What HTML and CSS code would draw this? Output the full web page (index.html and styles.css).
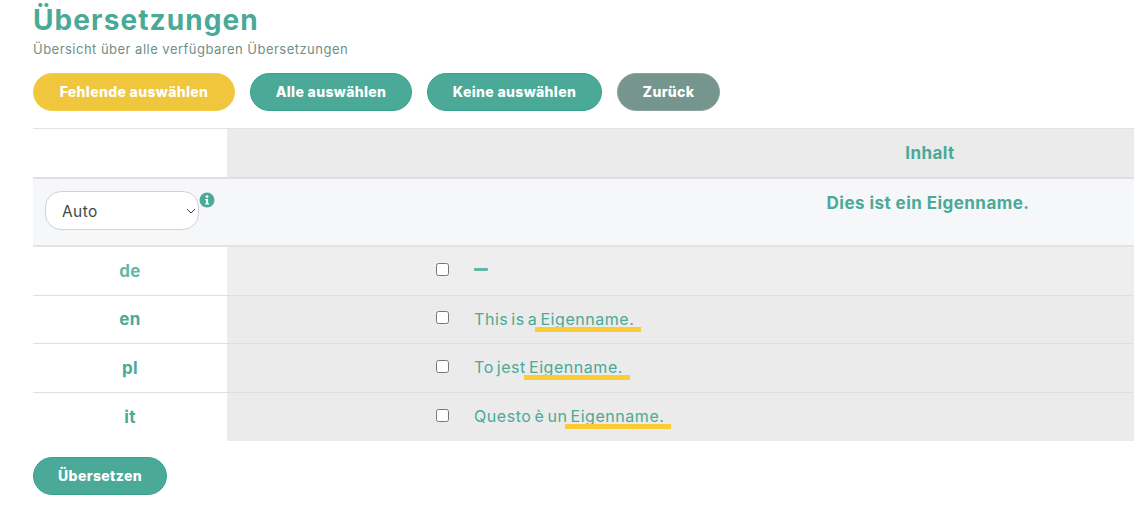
FILE: index.html
```html
<!DOCTYPE html>
<html lang="de">
<head>
    <meta charset="UTF-8" />
    <meta name="viewport" content="width=device-width, initial-scale=1.0" />
    <title>Übersetzungen</title>
    <link rel="stylesheet" href="styles.css">
</head>
<body>
    <h1 class="page-title">Übersetzungen</h1>
    <p class="page-subtitle">Übersicht über alle verfügbaren Übersetzungen</p>

    <div class="button-row">
        <button class="btn btn-yellow btn-missing">Fehlende auswählen</button>
        <button class="btn btn-green btn-all">Alle auswählen</button>
        <button class="btn btn-green btn-none">Keine auswählen</button>
        <button class="btn btn-grey btn-back">Zurück</button>
    </div>

    <div class="table">
        <div class="row row-head">
            <div class="cell-lang"></div>
            <div class="cell-check"></div>
            <div class="cell-text">Inhalt</div>
        </div>
        <div class="row row-source">
            <div class="cell-lang">
                <select class="lang-select"><option>Auto</option></select>
                <svg class="select-arrow" viewBox="0 0 10 6" width="10" height="6">
                    <path d="M1 1l4 4 4-4" fill="none" stroke="#3d4a47" stroke-width="1" />
                </svg>
                <svg class="info-icon" viewBox="0 0 16 16" width="16" height="16">
                    <circle cx="8" cy="8" r="7.5" fill="#4aa997" />
                    <circle cx="8" cy="4.6" r="1.4" fill="#fff" />
                    <path d="M6.2 7h2.9v4.2h1v1.2H6.1v-1.2h1V8.2h-.9z" fill="#fff" />
                </svg>
            </div>
            <div class="cell-check"></div>
            <div class="cell-text">Dies ist ein Eigenname.</div>
        </div>
        <div class="row row-lang row-empty">
            <div class="cell-lang">de</div>
            <div class="cell-check"><input type="checkbox" /></div>
            <div class="cell-text"><span class="dash"></span></div>
        </div>
        <div class="row row-lang">
            <div class="cell-lang">en</div>
            <div class="cell-check"><input type="checkbox" /></div>
            <div class="cell-text"><span>This is a <span class="mark">Eigenname.</span></span></div>
        </div>
        <div class="row row-lang">
            <div class="cell-lang">pl</div>
            <div class="cell-check"><input type="checkbox" /></div>
            <div class="cell-text"><span>To jest <span class="mark">Eigenname.</span></span></div>
        </div>
        <div class="row row-lang row-last">
            <div class="cell-lang">it</div>
            <div class="cell-check"><input type="checkbox" /></div>
            <div class="cell-text"><span>Questo è un <span class="mark">Eigenname.</span></span></div>
        </div>
    </div>

    <button class="btn btn-green btn-translate">Übersetzen</button>
</body>
</html>
```

FILE: styles.css
```css
html, body {
    overflow: hidden;
}

body {
    font-family: Inter, "Open Sans", sans-serif;
    margin: 0;
    padding: 0 0 0 33px;
    height: 516px;
    box-sizing: border-box;
    background-color: #fff;
    color: #4aa997;
}

.page-title {
    font-size: 28px;
    line-height: 34px;
    font-weight: 700;
    letter-spacing: 1.1px;
    margin: 3px 0 0;
}

.page-subtitle {
    font-size: 13px;
    line-height: 18px;
    letter-spacing: 0.48px;
    color: #6f8f88;
    margin: 3px 0 0;
}

.button-row {
    display: flex;
    gap: 15px;
    margin-top: 15px;
}

.btn {
    height: 38px;
    padding: 0 0 2px;
    border-radius: 19px;
    border: 1px solid transparent;
    font-family: inherit;
    font-size: 14px;
    font-weight: 800;
    letter-spacing: 0.35px;
    color: #fff;
    cursor: pointer;
}

.btn-yellow { background-color: #f0c63c; border-color: #f5cd47; }
.btn-green { background-color: #4aa997; border-color: #37a28e; }
.btn-grey { background-color: #75958d; border-color: #8aa69f; }

.btn-missing { width: 202px; }
.btn-all { width: 162px; }
.btn-none { width: 175px; }
.btn-back { width: 103px; }
.btn-translate { width: 134px; margin-top: 16px; display: block; }

.table {
    width: 1600px;
    margin-top: 17px;
    border-top: 1px solid #e2e2e6;
}

.row {
    display: grid;
    grid-template-columns: 194px 247px 912px;
    align-items: stretch;
}

.cell-lang {
    display: flex;
    align-items: center;
    justify-content: center;
    font-size: 17px;
    font-weight: 700;
    letter-spacing: 0.4px;
}

.cell-check {
    display: flex;
    align-items: center;
    justify-content: flex-end;
    padding-right: 25px;
    padding-bottom: 3px;
    background-color: #ebebeb;
}

.cell-text {
    display: flex;
    align-items: center;
    white-space: pre;
    background-color: #ebebeb;
    font-size: 16px;
    letter-spacing: 0.55px;
    word-spacing: -2px;
    padding-bottom: 1px;
}

.row-head {
    height: 48px;
    border-bottom: 2px solid #dfdfe5;
}

.row-head .cell-text,
.row-source .cell-text {
    justify-content: center;
    font-size: 17px;
    font-weight: 700;
    letter-spacing: 0.45px;
    word-spacing: 0;
}

.row-source {
    height: 68px;
    background-color: #f6f7f9;
    border-bottom: 2px solid #e3e3e8;
    box-sizing: border-box;
}

.row-source .cell-lang,
.row-source .cell-check,
.row-source .cell-text {
    background-color: #f6f7f9;
}

.row-source .cell-lang {
    justify-content: flex-start;
    align-items: flex-start;
    padding: 12px 0 0 12px;
    position: relative;
}

.row-source .cell-text {
    align-items: flex-start;
    padding: 14px 4px 0 0;
}

.lang-select {
    appearance: none;
    width: 154px;
    height: 39px;
    padding: 1px 0 0 16px;
    border: 1px solid #cfd2d8;
    border-radius: 16px;
    background-color: #fff;
    font-family: inherit;
    font-size: 15.5px;
    color: #3d4a47;
    letter-spacing: 0.4px;
}

.select-arrow {
    position: absolute;
    left: 153px;
    top: 29px;
}

.info-icon {
    position: absolute;
    left: 166px;
    top: 13px;
}

.row-lang {
    height: 48.5px;
    box-sizing: border-box;
    border-bottom: 1px solid #dedfe2;
}

.row-last {
    border-bottom: none;
}

.row-empty .cell-lang {
    color: #64b7a8;
}

.row-empty .cell-check,
.row-empty .cell-text {
    background-color: #eeeeee;
}

.cell-check input {
    width: 13px;
    height: 13px;
    margin: 0;
}

.dash {
    display: block;
    width: 14px;
    height: 3px;
    margin-bottom: 2px;
    background-color: #64b7a8;
    border-radius: 1px;
}

.mark {
    position: relative;
}

.mark::after {
    content: "";
    position: absolute;
    left: -5px;
    right: -7px;
    top: 18px;
    height: 5px;
    background-color: #fccb36;
}
```
